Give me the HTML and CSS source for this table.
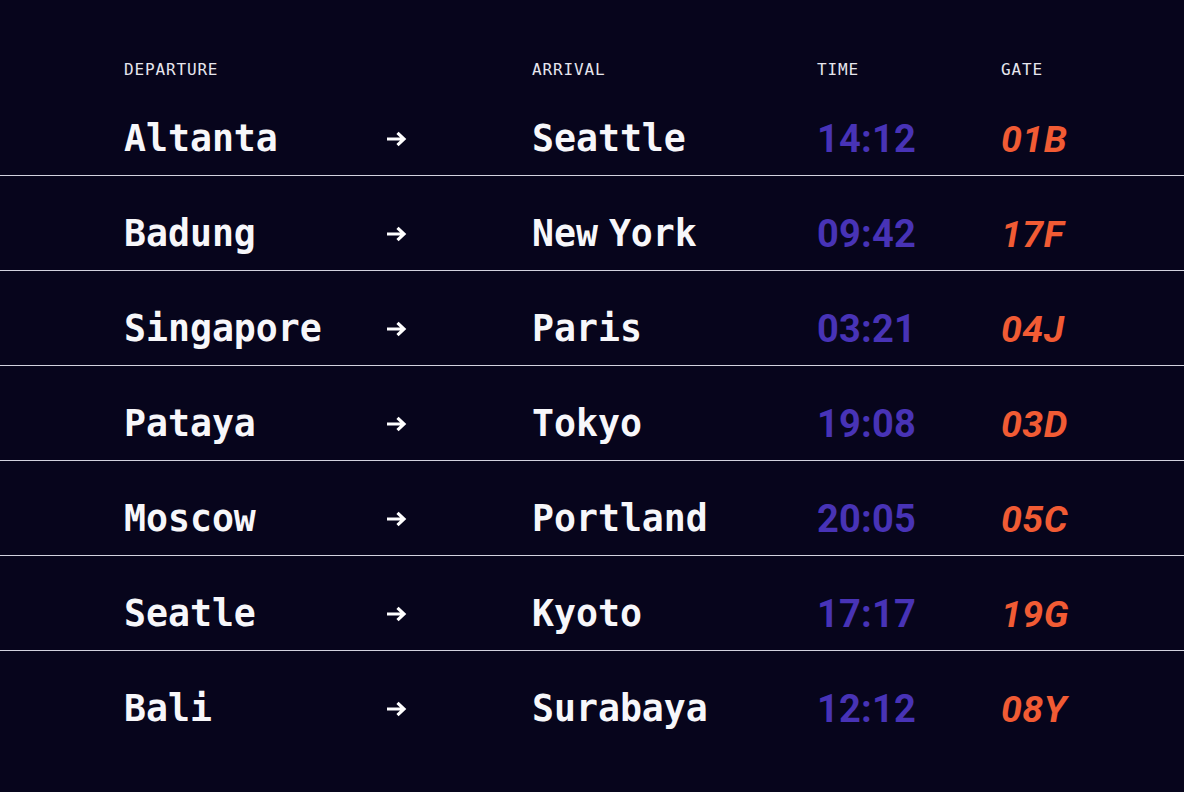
FILE: index.html
```html
<!DOCTYPE html>
<html lang="en">
<head>
<meta charset="utf-8">
<title>Departures</title>
<link rel="stylesheet" href="styles.css">
</head>
<body>
<main class="board">
  <div class="head">
    <span class="c-dep">Departure</span>
    <span class="c-arr"></span>
    <span class="c-to">Arrival</span>
    <span class="c-time">Time</span>
    <span class="c-gate">Gate</span>
  </div>
  <div class="row"><span class="c-dep city">Altanta</span><span class="c-arr"><svg class="arrow" viewBox="0 0 21 16"><path d="M1 8H18M11.5 1.8L18 8L11.5 14.2"/></svg></span><span class="c-to city">Seattle</span><span class="c-time time">14:12</span><span class="c-gate gate">01B</span></div>
  <div class="row"><span class="c-dep city">Badung</span><span class="c-arr"><svg class="arrow" viewBox="0 0 21 16"><path d="M1 8H18M11.5 1.8L18 8L11.5 14.2"/></svg></span><span class="c-to city">New York</span><span class="c-time time">09:42</span><span class="c-gate gate">17F</span></div>
  <div class="row"><span class="c-dep city">Singapore</span><span class="c-arr"><svg class="arrow" viewBox="0 0 21 16"><path d="M1 8H18M11.5 1.8L18 8L11.5 14.2"/></svg></span><span class="c-to city">Paris</span><span class="c-time time">03:21</span><span class="c-gate gate">04J</span></div>
  <div class="row"><span class="c-dep city">Pataya</span><span class="c-arr"><svg class="arrow" viewBox="0 0 21 16"><path d="M1 8H18M11.5 1.8L18 8L11.5 14.2"/></svg></span><span class="c-to city">Tokyo</span><span class="c-time time">19:08</span><span class="c-gate gate">03D</span></div>
  <div class="row"><span class="c-dep city">Moscow</span><span class="c-arr"><svg class="arrow" viewBox="0 0 21 16"><path d="M1 8H18M11.5 1.8L18 8L11.5 14.2"/></svg></span><span class="c-to city">Portland</span><span class="c-time time">20:05</span><span class="c-gate gate">05C</span></div>
  <div class="row"><span class="c-dep city">Seatle</span><span class="c-arr"><svg class="arrow" viewBox="0 0 21 16"><path d="M1 8H18M11.5 1.8L18 8L11.5 14.2"/></svg></span><span class="c-to city">Kyoto</span><span class="c-time time">17:17</span><span class="c-gate gate">19G</span></div>
  <div class="row"><span class="c-dep city">Bali</span><span class="c-arr"><svg class="arrow" viewBox="0 0 21 16"><path d="M1 8H18M11.5 1.8L18 8L11.5 14.2"/></svg></span><span class="c-to city">Surabaya</span><span class="c-time time">12:12</span><span class="c-gate gate">08Y</span></div>
</main>
</body>
</html>
```
FILE: styles.css
```css
html, body {
  margin: 0;
  padding: 0;
  background: #07051c;
  height: 100%;
  overflow: hidden;
}

.board {
  padding-top: 62px;
  display: flex;
  flex-direction: column;
}

.head,
.row {
  display: grid;
  grid-template-columns: 124px 262px 146px 285px 184px 1fr;
  align-items: center;
}

.head {
  height: 16px;
  margin-bottom: 3px;
  font-family: "DejaVu Sans Mono", "Liberation Mono", monospace;
  font-size: 16px;
  line-height: 16px;
  letter-spacing: 0.85px;
  text-transform: uppercase;
  color: #e6e6ee;
  font-weight: 400;
}

.head .c-dep { grid-column: 2; }
.head .c-arr { grid-column: 3; }
.head .c-to { grid-column: 4; }
.head .c-time { grid-column: 5; }
.head .c-gate { grid-column: 6; }

.row {
  padding: 40px 0 18px;
  height: 36px;
  border-bottom: 1px solid #d2d2de;
}

.row:last-child {
  border-bottom: none;
}

.row .c-dep { grid-column: 2; }
.row .c-arr { grid-column: 3; display: flex; align-items: center; }
.row .c-to { grid-column: 4; }
.row .c-time { grid-column: 5; }
.row .c-gate { grid-column: 6; }

.city {
  font-family: "DejaVu Sans Mono", "Liberation Mono", monospace;
  font-weight: 700;
  font-size: 36.5px;
  line-height: 36px;
  color: #f7f7fa;
  white-space: nowrap;
  word-spacing: -11px;
}

.arrow {
  width: 21px;
  height: 16px;
  margin-top: -1px;
  fill: none;
  stroke: #ffffff;
  stroke-width: 3.2;
  stroke-linecap: butt;
  stroke-linejoin: miter;
}

.time {
  font-family: Roboto, "Liberation Sans", sans-serif;
  font-weight: 700;
  font-size: 38px;
  line-height: 36px;
  color: #4833b6;
  letter-spacing: 0.2px;
}

.gate {
  font-family: Roboto, "Liberation Sans", sans-serif;
  font-weight: 700;
  font-style: italic;
  font-size: 37.5px;
  line-height: 36px;
  color: #f15b34;
  letter-spacing: 0.5px;
}
```
